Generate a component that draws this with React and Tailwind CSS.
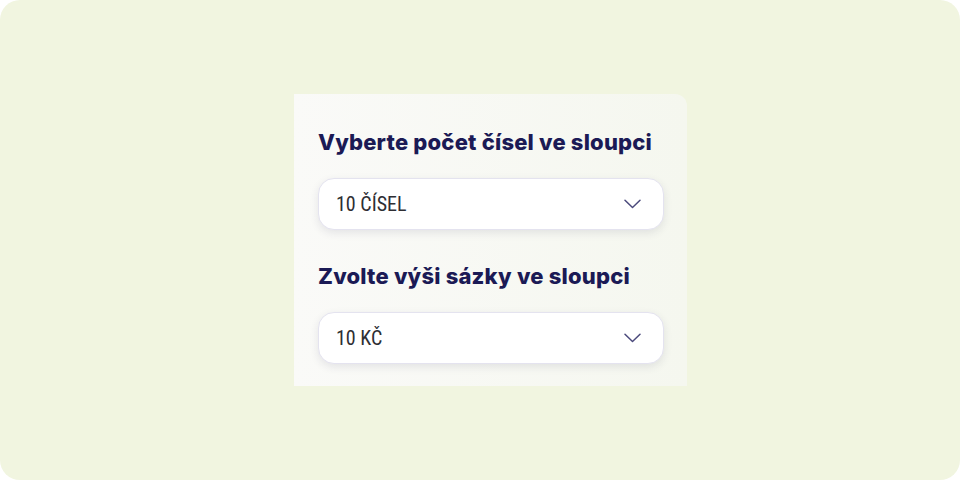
const FIELDS = [
  { label: "Vyberte počet čísel ve sloupci", value: "10 ČÍSEL" },
  { label: "Zvolte výši sázky ve sloupci", value: "10 KČ" },
];

function Select({ value }) {
  return (
    <button
      type="button"
      className="flex h-[52px] w-full items-center justify-between rounded-2xl border border-[#e4e3ef] bg-white pl-[17px] pr-[22px] shadow-[0_3px_8px_rgba(40,40,80,0.10)]"
    >
      <span
        className="text-[20px] leading-none text-[#2e2e33]"
        style={{ fontFamily: '"Roboto Condensed", "Liberation Sans Narrow", Roboto, sans-serif' }}
      >
        {value}
      </span>
      <svg width="17" height="10" viewBox="0 0 17 10" fill="none" className="text-[#4b4a7c]">
        <path d="M1 1.2 8.5 8.5 16 1.2" stroke="currentColor" strokeWidth="1.5" strokeLinecap="round" strokeLinejoin="round" />
      </svg>
    </button>
  );
}

export default function App() {
  return (
    <div className="h-[480px] w-[960px] bg-white">
      <div className="flex h-full w-full items-center justify-center rounded-[20px] bg-[#f1f5e0] pl-[21px]">
        <div className="flex w-[393px] flex-col rounded-tr-xl bg-gradient-to-r from-[#fafaf8] to-[#f5f7ef] pb-[22px] pl-6 pr-[23px] pt-[34px]">
          {FIELDS.map(({ label, value }, i) => (
            <div key={label} className={i > 0 ? "mt-8" : ""}>
              <h2
                className="mb-[22px] text-[22px] font-extrabold leading-7 tracking-[0.2px] text-[#1b1a55]"
                style={{ fontFamily: 'Inter, "Noto Sans", sans-serif' }}
              >
                {label}
              </h2>
              <Select value={value} />
            </div>
          ))}
        </div>
      </div>
    </div>
  );
}
